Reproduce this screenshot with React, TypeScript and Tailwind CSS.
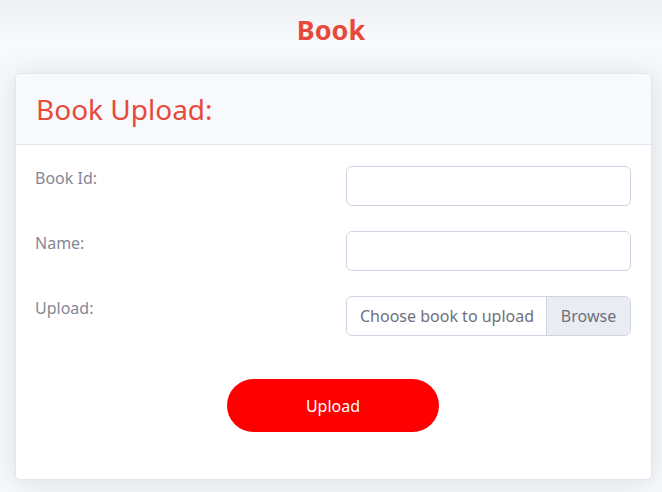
export default function App() {
  return (
    <div
      className="min-h-screen w-[662px] h-[492px] overflow-hidden bg-[#f8f9fc] bg-gradient-to-b from-[#eef0f4] to-[#f8f9fc] to-[40px]"
      style={{ fontFamily: "'Noto Sans', 'Open Sans', sans-serif" }}
    >
      <h1 className="pt-[13px] h-[73px] text-center text-[27px] leading-[34px] font-bold text-[#e74a3b]">
        Book
      </h1>

      <div className="ml-[15px] w-[637px] rounded-[5px] border border-[#e3e6f0] bg-white shadow-[0_2px_28px_0_rgba(58,59,69,0.15)] overflow-hidden">
        {/* Card header */}
        <div className="h-[71px] flex items-center px-[20px] bg-[#f8f9fc] border-b border-[#e3e6f0]">
          <h2 className="text-[28px] font-normal text-[#e74a3b] leading-none">Book Upload:</h2>
        </div>

        {/* Card body */}
        <div className="pl-[19px] pr-[20px] pt-[21px] pb-[47px]">
          <div className="grid grid-cols-[1fr_285px] gap-y-[25px]">
            <label className="text-[16px] leading-[24px] text-[#858796]">Book Id:</label>
            <input className="h-[40px] rounded-[6px] border border-[#d1d3e2] bg-white px-3 outline-none" />

            <label className="text-[16px] leading-[24px] text-[#858796]">Name:</label>
            <input className="h-[40px] rounded-[6px] border border-[#d1d3e2] bg-white px-3 outline-none" />

            <label className="text-[16px] leading-[24px] text-[#858796]">Upload:</label>
            <div className="h-[40px] flex rounded-[6px] border border-[#d1d3e2] overflow-hidden text-[16px] text-[#6e707e]">
              <span className="flex-1 flex items-center pl-[13px] whitespace-nowrap">Choose book to upload</span>
              <span className="w-[84px] flex items-center justify-center bg-[#eaecf4] border-l border-[#d1d3e2]">
                Browse
              </span>
            </div>
          </div>

          <div className="flex justify-center mt-[43px]">
            <button className="w-[212px] h-[53px] rounded-full bg-[#ff0000] text-white text-[16px]">
              Upload
            </button>
          </div>
        </div>
      </div>
    </div>
  );
}
